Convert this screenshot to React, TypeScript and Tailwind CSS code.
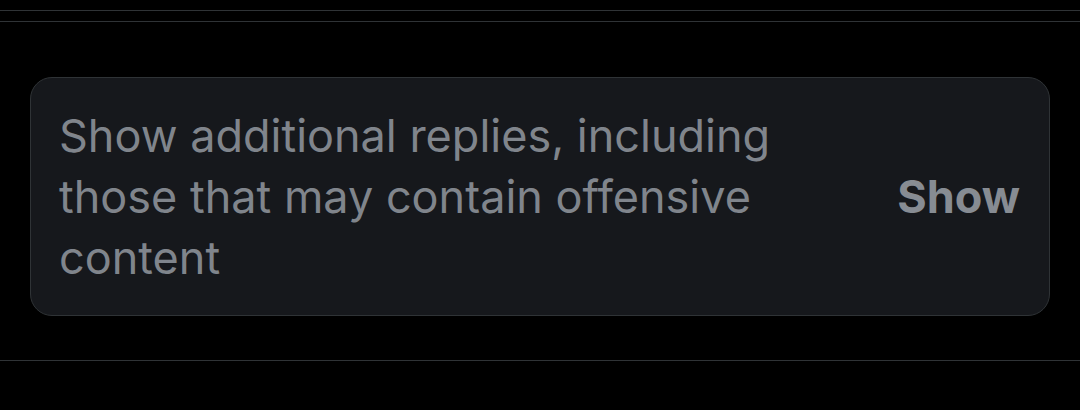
export default function App() {
	return (
		<main className="w-[1080px] h-[410px] bg-black overflow-hidden" style={{ fontFamily: "Inter, 'Noto Sans', sans-serif" }}>
			{/* divider lines at the top */}
			<div className="h-[10px]" />
			<div className="h-px bg-[#2f3336]" />
			<div className="h-[10px]" />
			<div className="h-px bg-[#2f3336]" />
			<div className="pt-[55px] pb-[44px] px-[30px]">
				<div className="flex items-center justify-between rounded-[22px] border border-[#2f3336] bg-[#16181c] pl-[28px] pr-[29px] py-[27px]">
					<p className="w-[770px] text-[45px] leading-[61px] text-[#80858c]">
						Show additional replies, including those that may contain offensive content
					</p>
					<button className="text-[45px] font-bold text-[#878c93]">Show</button>
				</div>
			</div>
			<div className="h-px bg-[#2f3336]" />
		</main>
	);
}
